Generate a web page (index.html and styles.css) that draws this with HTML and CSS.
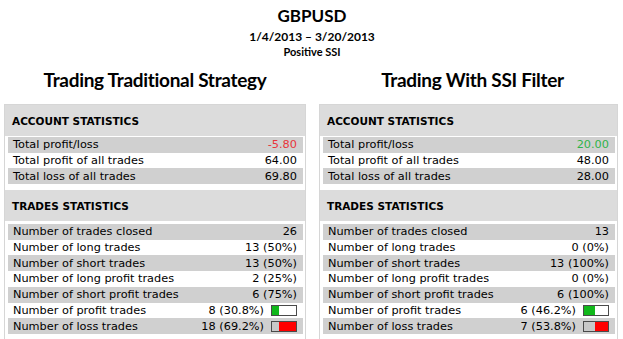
FILE: index.html
```html
<!DOCTYPE html>
<html>
<head>
<meta charset="utf-8">
<link rel="stylesheet" href="styles.css">
</head>
<body>
<header class="top">
  <div class="pair">GBPUSD</div>
  <div class="dates">1/4/2013 – 3/20/2013</div>
  <div class="note">Positive SSI</div>
</header>
<main class="cols">
  <section class="col col-left">
    <h2 class="col-title">Trading Traditional Strategy</h2>
    <div class="panel">
      <div class="sec-head">ACCOUNT STATISTICS</div>
      <div class="sec-body sec-body-acc">
        <div class="row alt"><span>Total profit/loss</span><span class="val neg">-5.80</span></div>
        <div class="row"><span>Total profit of all trades</span><span class="val">64.00</span></div>
        <div class="row alt"><span>Total loss of all trades</span><span class="val">69.80</span></div>
      </div>
      <div class="sec-head">TRADES STATISTICS</div>
      <div class="sec-body">
        <div class="row alt"><span>Number of trades closed</span><span class="val">26</span></div>
        <div class="row"><span>Number of long trades</span><span class="val">13 (50%)</span></div>
        <div class="row alt"><span>Number of short trades</span><span class="val">13 (50%)</span></div>
        <div class="row"><span>Number of long profit trades</span><span class="val">2 (25%)</span></div>
        <div class="row alt"><span>Number of short profit trades</span><span class="val">6 (75%)</span></div>
        <div class="row"><span>Number of profit trades</span><span class="val">8 (30.8%)<span class="bar bar-win"><span class="fill" style="width:30.8%"></span></span></span></div>
        <div class="row alt"><span>Number of loss trades</span><span class="val">18 (69.2%)<span class="bar bar-loss"><span class="fill" style="width:69.2%"></span></span></span></div>
      </div>
    </div>
  </section>
  <section class="col col-right">
    <h2 class="col-title">Trading With SSI Filter</h2>
    <div class="panel">
      <div class="sec-head">ACCOUNT STATISTICS</div>
      <div class="sec-body sec-body-acc">
        <div class="row alt"><span>Total profit/loss</span><span class="val pos">20.00</span></div>
        <div class="row"><span>Total profit of all trades</span><span class="val">48.00</span></div>
        <div class="row alt"><span>Total loss of all trades</span><span class="val">28.00</span></div>
      </div>
      <div class="sec-head">TRADES STATISTICS</div>
      <div class="sec-body">
        <div class="row alt"><span>Number of trades closed</span><span class="val">13</span></div>
        <div class="row"><span>Number of long trades</span><span class="val">0 (0%)</span></div>
        <div class="row alt"><span>Number of short trades</span><span class="val">13 (100%)</span></div>
        <div class="row"><span>Number of long profit trades</span><span class="val">0 (0%)</span></div>
        <div class="row alt"><span>Number of short profit trades</span><span class="val">6 (100%)</span></div>
        <div class="row"><span>Number of profit trades</span><span class="val">6 (46.2%)<span class="bar bar-win"><span class="fill" style="width:46.2%"></span></span></span></div>
        <div class="row alt"><span>Number of loss trades</span><span class="val">7 (53.8%)<span class="bar bar-loss"><span class="fill" style="width:53.8%"></span></span></span></div>
      </div>
    </div>
  </section>
</main>
</body>
</html>
```

FILE: styles.css
```css
html, body {
  margin: 0;
  padding: 0;
  background: #ffffff;
  overflow: hidden;
}
body {
  width: 623px;
  height: 339px;
  font-family: Lato, "Open Sans", sans-serif;
  color: #000;
}
.top {
  text-align: center;
  font-weight: bold;
  padding-top: 6px;
  padding-left: 1px;
}
.pair {
  font-size: 17px;
  line-height: 20px;
}
.dates {
  font-size: 12px;
  line-height: 15px;
  margin-top: 3px;
}
.note {
  font-size: 11px;
  line-height: 14px;
  margin-top: 1px;
}
.cols {
  display: flex;
  gap: 13px;
  padding-left: 4px;
  margin-top: 9px;
}
.col-left { width: 302px; }
.col-right { width: 299px; }
.col-title {
  margin: 0 0 12px;
  font-size: 19px;
  line-height: 24px;
  font-weight: bold;
  text-align: center;
  letter-spacing: -0.3px;
}
.col-right .col-title { padding-left: 8px; }
.panel {
  border: 1px solid #d6d6d6;
  border-bottom: none;
  height: 236px;
  box-sizing: border-box;
}
.sec-head {
  background: #dcdcdc;
  height: 31px;
  display: flex;
  align-items: center;
  padding-left: 7px;
  font-family: "DejaVu Sans", sans-serif;
  font-weight: bold;
  font-size: 10.5px;
}
.sec-body {
  padding: 3px 2px 4px 3px;
}
.sec-body-acc {
  padding-top: 1px;
  padding-bottom: 6px;
}
.row {
  display: flex;
  justify-content: space-between;
  align-items: center;
  height: 15.7px;
  padding: 0 6px 0 5px;
  font-family: "DejaVu Sans", sans-serif;
  font-size: 11.3px;
}
.row.alt { background: #d0d0d0; }
.val {
  display: flex;
  align-items: center;
}
.neg { color: #e8353b; }
.pos { color: #2fb34a; }
.bar {
  display: flex;
  width: 24px;
  height: 9px;
  margin-left: 7px;
  border: 1px solid #4a4a4a;
  background: #ffffff;
}
.bar-win .fill { background: #11b81b; }
.bar-loss { flex-direction: row-reverse; background: #c8c8c8; }
.bar-loss .fill { background: #ff0000; }
```
